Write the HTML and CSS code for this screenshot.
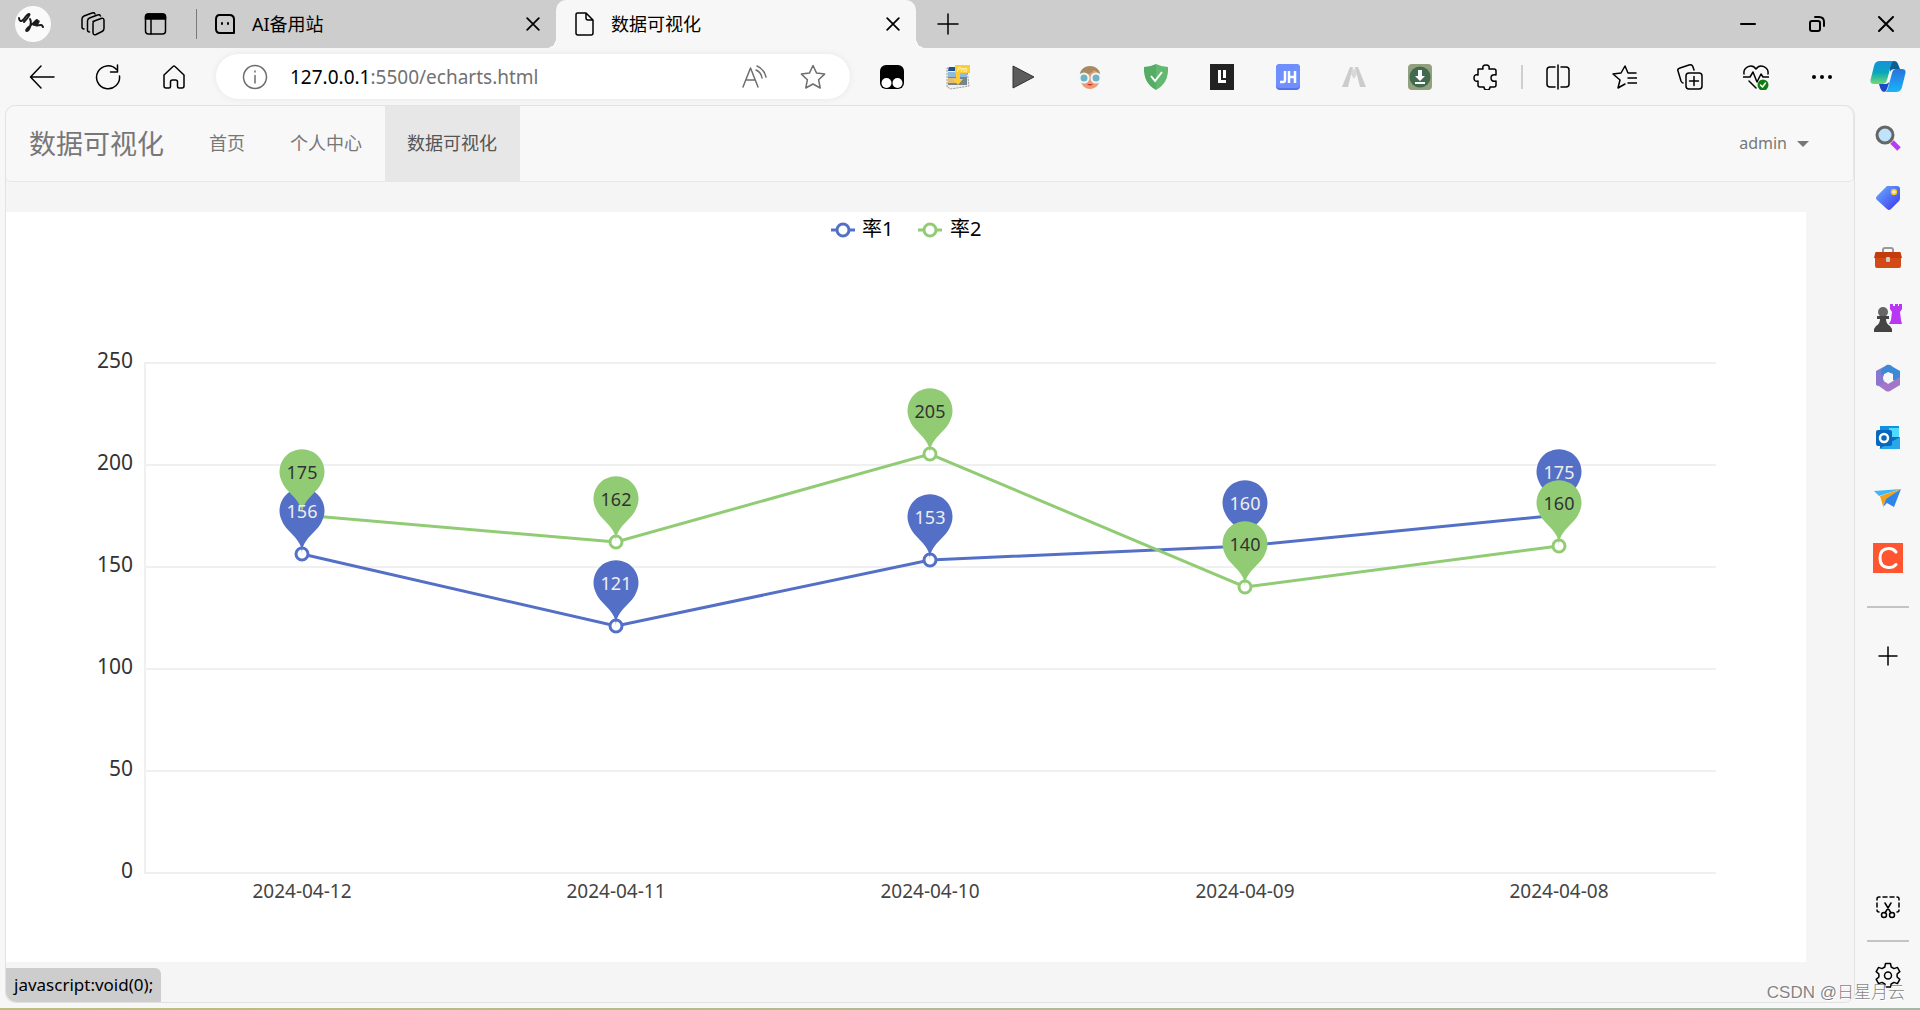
FILE: index.html
```html
<!DOCTYPE html>
<html lang="zh-CN">
<head>
<meta charset="utf-8">
<meta name="viewport" content="width=device-width, initial-scale=1">
<title>数据可视化</title>
<link rel="stylesheet" href="styles.css">
</head>
<body>
<header class="titlebar">
  <button class="avatar" aria-label="个人资料"><svg viewBox="0 0 36 36" width="36" height="36"><circle cx="18" cy="18" r="18" fill="#fafafa"/><path d="M4 12c0 3 2 4 4 2s4-6 6-6-3 6-5 8M15 13c2 3 0 11-3 12-2 0 0-3 3-5s5-5 7-6M19 19c2-2 2-4 4-4s-1 3-2 4 3 0 5 0 1 1 2 2" fill="none" stroke="#1c1c1c" stroke-width="2" stroke-linecap="round"/></svg></button>
  <button class="tool" aria-label="工作区"><svg class="ic" viewBox="0 0 26 26" width="26" height="26"><path d="M13 10.500l8-3q3-1 3 2v8q0 2-2 3l-6 3q-3 1-3-2v-9q0-2 1-2z"/><path d="M9.500 21q-2 0-2-2v-9q0-2 2-3l8-3q2-1 3 1M4 18q-2 0-2-2v-8q0-2 2-3l8-3q2-1 3 1"/></svg></button>
  <button class="tool" aria-label="标签操作"><svg class="ic" viewBox="0 0 26 26" width="26" height="26"><rect x="2.500" y="3" width="20" height="20" rx="3"/><path d="M2.500 8V6q0-3 3-3h14q3 0 3 3v2z" fill="#000"/><path d="M8 8v15"/></svg></button>
  <span class="rule"></span>
  <div class="tab">
    <svg class="ic heavy" viewBox="0 0 24 24" width="24" height="24"><path d="M6.500 3h10q4.500 0 4.500 4.500V21H7q-4 0-4-4V7.500Q3 3 6.500 3z"/><path d="M9 11v1M15 11v1"/></svg>
    <span class="tab-name">AI备用站</span>
    <button aria-label="关闭标签页"><svg class="ic" viewBox="0 0 12 12" width="14" height="14"><path d="M1 1l10 10M11 1L1 11"/></svg></button>
  </div>
  <div class="tab active">
    <svg class="ic" viewBox="0 0 24 26" width="24" height="26"><path d="M5.500 2H14l7 7v13q0 2-2 2H6q-2 0-2-2V4q0-2 1.500-2zM14 2v5q0 2 2 2h5"/></svg>
    <span class="tab-name">数据可视化</span>
    <button aria-label="关闭标签页"><svg class="ic" viewBox="0 0 12 12" width="14" height="14"><path d="M1 1l10 10M11 1L1 11"/></svg></button>
  </div>
  <button class="newtab" aria-label="新建标签页"><svg class="ic" viewBox="0 0 22 22" width="22" height="22"><path d="M11 1v20M1 11h20"/></svg></button>
  <div class="window-buttons">
    <button aria-label="最小化"><svg class="ic heavy" viewBox="0 0 16 16" width="16" height="16"><path d="M1 8h14"/></svg></button>
    <button aria-label="还原"><svg class="ic heavy" viewBox="0 0 16 16" width="16" height="16"><rect x="1" y="5" width="10" height="10" rx="2"/><path d="M6 1h4q5 0 5 5v4"/></svg></button>
    <button aria-label="关闭"><svg class="ic heavy" viewBox="0 0 16 16" width="16" height="16"><path d="M1 1l14 14M15 1L1 15"/></svg></button>
  </div>
</header>

<div class="toolbar">
  <button aria-label="返回"><svg class="ic" viewBox="0 0 26 26" width="26" height="26"><path d="M25 13H2M12 2L1.500 13 12 24"/></svg></button>
  <button aria-label="刷新"><svg class="ic" viewBox="0 0 26 26" width="26" height="26"><path d="M24.500 12A11.500 11.500 0 1 1 21.500 5.500M22.500 1v7h-7"/></svg></button>
  <button aria-label="主页"><svg class="ic" viewBox="0 0 26 26" width="26" height="26"><path d="M3 11L12 2.500q1-1 2 0L23 11v11q0 2-2 2h-3q-1.500 0-1.500-1.500V18q0-2-2-2h-3q-2 0-2 2v4.500Q9.500 24 8 24H5q-2 0-2-2z"/></svg></button>
  <div class="address">
    <svg class="ic soft" viewBox="0 0 26 26" width="26" height="26"><circle cx="13" cy="13" r="11.500"/><path d="M13 11.500V19M13 7v1"/></svg>
    <a class="url" href="#"><b>127.0.0.1</b>:5500/echarts.html</a>
    <button aria-label="大声朗读"><svg class="ic soft" viewBox="0 0 26 26" width="26" height="26"><path d="M2 23L9.500 4 17 23M5 16h9M16 2q7 3 9 11M15 6q5 2 6 8"/></svg></button>
    <button aria-label="收藏"><svg class="ic soft" viewBox="0 0 26 26" width="26" height="26"><path d="M13 1.500l3.600 7.600 8 1-6 5.600 1.600 8.300L13 20l-7.200 4 1.600-8.300-6-5.600 8-1z"/></svg></button>
  </div>
  <div class="extensions">
    <button aria-label="扩展一"><svg viewBox="0 0 24 24" width="24" height="24"><rect width="24" height="24" rx="6"/><circle cx="6.500" cy="18" r="5" fill="#fff"/><circle cx="17.500" cy="18" r="5" fill="#fff"/></svg></button>
    <button aria-label="图片下载"><svg viewBox="0 0 26 26" width="26" height="26"><path d="M2 4l20 1 2 17-18 3-4-2z" fill="#eee" stroke="#999" stroke-dasharray="2 1"/><path d="M4 3h8l2 4H3z" fill="#234f93"/><path d="M3 8h19v5H3z" fill="#8ebce0"/><path d="M3 13h19v8H3z" fill="#77848c"/><path d="M3 14h8v5H3z" fill="#e4bd75"/><path d="M10 1h15v8H15v6h3l-5 6-5-6h3V9h-1z" fill="#fc3"/><text x="12" y="8" font-size="7" font-style="italic" fill="#fff">Pro</text></svg></button>
    <button aria-label="播放"><svg viewBox="0 0 24 24" width="24" height="24"><path d="M1 1l21 11L1 23z" fill="#5c5c5c" stroke="#333"/></svg></button>
    <button aria-label="扩展四"><svg viewBox="0 0 24 24" width="24" height="24"><path d="M2 12C1 5 6 1 12 1s11 4 10 11z" fill="#a78a60"/><path d="M2 12c3 0 11-3 14-7 3 2 6 4 6 8 0 7-5 11-10 11S2 20 2 12z" fill="#ec9b72"/><path d="M9 19h6q-3 3-6 0z" fill="#c33"/><circle cx="6" cy="13" r="4.500" fill="#6fb3c4" stroke="#eef8fa" stroke-width="2"/><circle cx="18" cy="13" r="4.500" fill="#6fb3c4" stroke="#eef8fa" stroke-width="2"/></svg></button>
    <button aria-label="广告拦截"><svg viewBox="0 0 26 26" width="26" height="26"><path d="M13 0q6 3 12 3 1 16-12 23z" fill="#63b970"/><path d="M13 0Q7 3 1 3q-1 16 12 23z" fill="#55ad65"/><path d="M8 12l4 5 7-9" stroke="#fff" stroke-width="2" fill="none"/></svg></button>
    <button aria-label="LI"><svg viewBox="0 0 24 26" width="24" height="26"><path fill="#222" d="M0 0h24v26H0z"/><path d="M9.500 6v11.500H16M14.500 6v8" fill="none" stroke="#fff" stroke-width="3"/></svg></button>
    <button aria-label="JH"><svg viewBox="0 0 24 26" width="24" height="26"><rect width="24" height="26" rx="4" fill="#5871e8"/><rect width="24" height="24" rx="4" fill="#6f8fff"/><path d="M9 7v9q0 2-2 2H4M13 7v12M19 7v12M13 13h6" fill="none" stroke="#fff" stroke-width="2.500"/></svg></button>
    <button aria-label="扩展八"><svg viewBox="0 0 24 24" width="24" height="24"><path d="M0 22L8 2h3L6 22z" fill="#ccc"/><path d="M24 22L16 2h-3l5 20z" fill="#ccc"/><path d="M9 9l3 5 3-5-2-7-1 4-1-4z" fill="#d8d8d8"/></svg></button>
    <button aria-label="下载"><svg viewBox="0 0 26 26" width="26" height="26"><rect x="1" width="24" height="26" rx="4" fill="#93a07f"/><circle cx="13" cy="13" r="10.500" fill="#426b4d"/><path d="M11 6h4v6h3l-5 5-5-5h3zM8 18h10v2H8z" fill="#fff"/></svg></button>
    <button aria-label="扩展"><svg class="ic" viewBox="0 0 26 26" width="26" height="26"><path d="M5 5h5q-1-4 3-4t3 4h5q2 0 2 2v4q-5-1-5 3t5 3v4q0 2-2 2h-4q0 3-3 3t-3-3H7q-2 0-2-2v-4q-4 1-4-3t4-3z"/></svg></button>
  </div>
  <span class="rule pale"></span>
  <button aria-label="分屏"><svg class="ic" viewBox="0 0 26 26" width="26" height="26"><path d="M10 3H5Q2 3 2 6v14q0 3 3 3h5M16 3h5q3 0 3 3v14q0 3-3 3h-5M13 1v24"/></svg></button>
  <button aria-label="收藏夹"><svg class="ic" viewBox="0 0 26 26" width="26" height="26"><path d="M14 20l-7 4 2-8-7-6 8-1 4-7 3 7h8M17 14h9M17 19h9"/></svg></button>
  <button aria-label="集锦"><svg class="ic" viewBox="0 0 26 26" width="26" height="26"><rect x="9" y="9" width="16" height="16" rx="3"/><path d="M17 12.500v9M12.500 17h9M6 19q-1 0-2-2L1 7q-1-2 2-3l9-3q3-1 4 2l1 3"/></svg></button>
  <button aria-label="浏览器概要"><svg class="ic" viewBox="0 0 26 26" width="26" height="26"><path d="M1 10C0 3 9-1 13 5c4-6 13-2 12 5M0 13h7l3-5 4 10 4-8 2 3h6M6 17l7 7"/><circle cx="20" cy="21" r="5.500" fill="#107c10" stroke="none"/><path d="M17.500 21l2 2 3-4" stroke="#fff"/></svg></button>
  <button aria-label="设置及其他"><svg viewBox="0 0 24 24" width="24" height="24"><circle cx="4" cy="12" r="2"/><circle cx="12" cy="12" r="2"/><circle cx="20" cy="12" r="2"/></svg></button>
  <button aria-label="Copilot"><svg viewBox="0 0 36 34" width="36" height="34"><defs><linearGradient id="cp1" x2="0" y2="1"><stop stop-color="#1590dc"/><stop offset=".5" stop-color="#0aa6bd"/><stop offset="1" stop-color="#6fdc72"/></linearGradient><linearGradient id="cp2" x2="0" y2="1"><stop stop-color="#2a73dc"/><stop offset="1" stop-color="#18b4fb"/></linearGradient></defs><path d="M19 1h5q3 0 4 3l2 5h-5q-4 0-5 3z" fill="#0d5c93"/><path d="M9 24h6q4 0 5-4l-3 9q-1 3-3 3-3 0-5-8z" fill="#1b49c9"/><path d="M10 1h15q-3 0-4 4l-4 15q-1 4-5 4H4q-5 0-3-6L4 6q1-5 6-5z" fill="url(#cp1)"/><path d="M26 9h6q5 0 3 6l-3 12q-1 5-6 5H14q3 0 4-4l4-15q1-4 4-4z" fill="url(#cp2)"/></svg></button>
</div>

<div class="workspace">
  <main class="page">
    <nav class="navbar">
      <a class="brand" href="#">数据可视化</a>
      <ul class="menu">
        <li><a href="#">首页</a></li>
        <li><a href="#">个人中心</a></li>
        <li><a class="current" href="#">数据可视化</a></li>
      </ul>
      <button class="account">admin<span class="caret"></span></button>
    </nav>

    <section class="chart">
      <svg viewBox="0 0 1800 750" role="img" aria-label="率1 率2 折线图">
        <defs>
          <path id="pin" d="M-20-33A22.500 22.500 0 1 1 20-33C15-21 0-16 0 0 0-16-15-21-20-33z"/>
          <circle id="dot" r="6" fill="#fff" stroke-width="3"/>
        </defs>
        <g class="legend">
          <g class="blue"><path d="M825 18h24"/><circle cx="837" cy="18" r="6"/></g>
          <text x="856" y="24">率1</text>
          <g class="green"><path d="M912 18h24"/><circle cx="924" cy="18" r="6"/></g>
          <text x="944" y="24">率2</text>
        </g>
        <path class="grid" d="M138 151H1710M138 253H1710M138 355H1710M138 457H1710M138 559H1710M138 661H1710M139 150V661"/>
        <g class="y-axis">
          <text x="127" y="156">250</text><text x="127" y="258">200</text><text x="127" y="360">150</text>
          <text x="127" y="462">100</text><text x="127" y="564">50</text><text x="127" y="666">0</text>
        </g>
        <g class="x-axis">
          <text x="296" y="686">2024-04-12</text><text x="610" y="686">2024-04-11</text><text x="924" y="686">2024-04-10</text>
          <text x="1239" y="686">2024-04-09</text><text x="1553" y="686">2024-04-08</text>
        </g>
        <g class="blue">
          <polyline points="296,342 610,414 924,348 1239,334 1553,303"/>
          <use href="#dot" x="296" y="342"/><use href="#dot" x="610" y="414"/><use href="#dot" x="924" y="348"/><use href="#dot" x="1239" y="334"/><use href="#dot" x="1553" y="303"/>
        </g>
        <g class="green">
          <polyline points="296,303 610,330 924,242 1239,375 1553,334"/>
          <use href="#dot" x="296" y="303"/><use href="#dot" x="610" y="330"/><use href="#dot" x="924" y="242"/><use href="#dot" x="1239" y="375"/><use href="#dot" x="1553" y="334"/>
        </g>
        <g class="blue-pins">
          <use href="#pin" x="296" y="342"/><use href="#pin" x="610" y="414"/><use href="#pin" x="924" y="348"/><use href="#pin" x="1239" y="334"/><use href="#pin" x="1553" y="303"/>
        </g>
        <g class="green-pins">
          <use href="#pin" x="296" y="303"/><use href="#pin" x="610" y="330"/><use href="#pin" x="924" y="242"/><use href="#pin" x="1239" y="375"/><use href="#pin" x="1553" y="334"/>
        </g>
        <g class="pin-text light">
          <text x="296" y="306">156</text><text x="610" y="378">121</text><text x="924" y="312">153</text><text x="1239" y="298">160</text><text x="1553" y="267">175</text>
        </g>
        <g class="pin-text">
          <text x="296" y="267">175</text><text x="610" y="294">162</text><text x="924" y="206">205</text><text x="1239" y="339">140</text><text x="1553" y="298">160</text>
        </g>
      </svg>
    </section>
    <div class="status">javascript:void(0);</div>
  </main>

  <aside class="sidebar">
    <button aria-label="搜索"><svg viewBox="0 0 26 26" width="26" height="26"><path d="M17 17l7 7" stroke="#b83cf5" stroke-width="5"/><circle cx="10" cy="10" r="8" fill="#bfe3fb" stroke="#666" stroke-width="3"/></svg></button>
    <button aria-label="购物"><svg viewBox="0 0 26 26" width="26" height="26"><defs><linearGradient id="tg" x2="1" y2="1"><stop stop-color="#6cb0ff"/><stop offset="1" stop-color="#3b34ee"/></linearGradient></defs><path d="M12 1h10q3 0 3 3v9q0 2-1 3l-8 8q-2 2-4 0l-10-9q-2-2 0-4l8-8z" fill="url(#tg)"/><circle cx="19" cy="7" r="2.500" fill="#eee" stroke="#f5c518" stroke-width="1.500"/></svg></button>
    <button aria-label="工具"><svg viewBox="0 0 28 24" width="28" height="24"><path d="M9 8V4q0-2 2-2h6q2 0 2 2v4" fill="none" stroke="#999" stroke-width="2"/><rect x="1" y="10" width="26" height="12" rx="2" fill="#d34a17"/><path d="M2 6h24q1 0 1 2l1 4H0l1-4q0-2 1-2z" fill="#c23c0c"/><rect x="12" y="11" width="4" height="5" rx="1" fill="#ccc"/></svg></button>
    <button aria-label="游戏"><svg viewBox="0 0 28 28" width="28" height="28"><path d="M16 0h3v2h2V0h3v2h1V0h3v5l-2 3 1 8 1 4H15l2-4 1-8-2-3z" fill="#b836f4"/><circle cx="9" cy="8" r="5" fill="#666"/><path d="M3 12h12v3h-3q0 5 4 7l2 3v3H0v-3l2-3q4-2 4-7H3z" fill="#444"/></svg></button>
    <button aria-label="Microsoft 365"><svg viewBox="0 0 26 28" width="26" height="28"><path d="M12 1L1 7v14l8-4V9l8-5q-3-4-5-3z" fill="#7a7fd4"/><path d="M12 1q3-1 6 2l7 4v12l-7-3V10l-5-2-7 4V6z" fill="#3a8ad8"/><path d="M1 20l8-4 4 4 12-7v8l-10 6q-2 1-4 0z" fill="#a276c8"/><path d="M1 8l7 3v9l-6 2-1-2z" fill="#8a78d0"/><circle cx="13" cy="14" r="5" fill="#f7f7f7"/></svg></button>
    <button aria-label="Outlook"><svg viewBox="0 0 26 26" width="26" height="26"><path fill="#1490df" d="M5 1h19v12H5z"/><path fill="#50d9ff" d="M14 3h10v9H14z"/><path fill="#0f6cbd" d="M5 12h20v12H5z"/><path fill="#28a8ea" d="M25 12v12H4z"/><rect x="1" y="5" width="16" height="16" rx="2" fill="#0669bd"/><circle cx="9" cy="13" r="4" fill="none" stroke="#fff" stroke-width="2.500"/></svg></button>
    <button aria-label="Drop"><svg viewBox="0 0 28 22" width="28" height="22"><path d="M0 4l27-2-22 7z" fill="#43b7f5"/><path d="M27 2L6 9l3 10 3-6z" fill="#f1a21b"/><path d="M27 2L12 12l-3 8 4-4 7 4z" fill="#2f86ea"/></svg></button>
    <button aria-label="C"><svg viewBox="0 0 30 30" width="30" height="30"><path fill="#ff5530" d="M0 0h30v30H0z"/><path d="M23 9q-3-4-8-3.500Q7 6 7 15q0 9 8 9.500 5 .5 8-3" fill="none" stroke="#fff" stroke-width="3" stroke-linecap="round"/></svg></button>
    <hr>
    <button class="add" aria-label="添加"><svg class="ic" viewBox="0 0 20 20" width="20" height="20"><path d="M10 1v18M1 10h18"/></svg></button>
    <button class="snip" aria-label="屏幕截图"><svg class="ic" viewBox="0 0 26 26" width="26" height="26"><path d="M2 6V5q0-2 2-2h1M8 3h4M15 3h4M22 3q2 0 2 2v1M24 9v4M24 16q0 2-2 2M2 9v4M2 16q0 2 2 2M10 9l6 10M16 9l-6 10"/><circle cx="9" cy="21" r="2.500"/><circle cx="17" cy="21" r="2.500"/></svg></button>
    <hr class="low">
    <button aria-label="设置"><svg class="ic" viewBox="0 0 26 26" width="26" height="26"><path d="M10.500 1.500h5l.7 3.500 2.800 1.600 3.400-1.200 2.400 4.200-2.700 2.400v3l2.700 2.400-2.400 4.200-3.400-1.200-2.800 1.600-.7 3h-5l-.7-3L7 20.400l-3.400 1.200-2.400-4.200L3.900 15v-3L1.200 9.600l2.400-4.200L7 6.600 9.800 5z" stroke-linejoin="round"/><circle cx="13" cy="13.500" r="3.500"/></svg></button>
  </aside>
</div>
<footer class="desktop-edge"></footer>
<div class="watermark">CSDN @日星月云</div>
</body>
</html>
```
FILE: styles.css
```css
* { box-sizing: border-box; }

body {
  margin: 0;
  min-height: 100vh;
  display: flex;
  flex-direction: column;
  position: relative;
  background: #f7f7f7;
  color: #000;
  font-family: "Noto Sans", "Noto Sans CJK SC", sans-serif;
  font-size: 18px;
}

button {
  display: flex;
  align-items: center;
  justify-content: center;
  padding: 0;
  border: 0;
  background: none;
  color: inherit;
  font: inherit;
}

a { color: inherit; text-decoration: none; }
svg { display: block; flex: none; }
.ic { fill: none; stroke: #000; stroke-width: 1.5; stroke-linecap: round; stroke-linejoin: round; }
.heavy { stroke-width: 2; }
.soft { stroke: #6e6e6e; }

/* title bar and tabs */
.titlebar { display: flex; align-items: center; height: 48px; padding-left: 15px; background: #cdcdcd; }
.avatar { width: 36px; margin-right: 10px; }
.tool { width: 63px; height: 48px; }
.rule { width: 1px; height: 30px; margin: 0 9px; background: #7a7a7a; }
.rule.pale { width: 2px; height: 24px; margin: 0 2px; background: #cfcfcf; }

.tab {
  display: flex;
  align-items: center;
  flex: 0 1 350px;
  height: 48px;
  padding: 0 16px;
  position: relative;
}
.tab:not(.active) { padding-left: 7px; }
.tab > .ic { margin-right: 15px; }
.tab-name { flex: 1; line-height: 24px; white-space: nowrap; }
.tab.active { flex-basis: 360px; margin-right: 21px; background: #f7f7f7; border-radius: 10px 10px 0 0; }
.tab.active::before,
.tab.active::after { content: ""; position: absolute; bottom: 0; width: 10px; height: 10px; }
.tab.active::before { left: -10px; background: radial-gradient(circle at 0 0, transparent 10px, #f7f7f7 10px); }
.tab.active::after { right: -10px; background: radial-gradient(circle at 100% 0, transparent 10px, #f7f7f7 10px); }
.newtab { width: 22px; height: 48px; }
.window-buttons { display: flex; margin-left: auto; }
.window-buttons button { width: 69px; height: 46px; }

/* address row */
.toolbar { display: flex; align-items: center; height: 57px; padding-left: 9px; }
.toolbar > button, .extensions button { flex: 0 0 66px; height: 48px; }
.toolbar > button:last-child { flex-basis: 65px; }
.address {
  display: flex;
  align-items: center;
  flex: 1;
  min-width: 0;
  height: 45px;
  margin: 0 9px;
  padding: 0 8px 0 26px;
  border-radius: 24px;
  background: #fff;
  box-shadow: 0 0 6px #e6e6e6;
}
.address button { flex: 0 0 59px; height: 44px; }
.url { flex: 1; padding-left: 22px; font-size: 19px; line-height: 26px; color: #717171; white-space: nowrap; }
.url b { font-weight: 400; color: #000; }
.extensions { display: flex; }

/* window body */
.workspace { display: flex; flex: 1; }
.page {
  display: flex;
  flex-direction: column;
  flex: 1;
  min-width: 0;
  position: relative;
  margin: 0 0 5px 5px;
  border: 1px solid #e2e2e2;
  border-radius: 10px;
  background: #f5f5f5;
}
.navbar {
  display: flex;
  height: 76px;
  margin-bottom: 30px;
  border: 1px solid #e7e7e7;
  border-top: 0;
  border-left: 0;
  border-radius: 10px 10px 5px 5px;
  background: #f8f8f8;
  color: #777;
  line-height: 75px;
}
.brand { padding: 0 23px; font-size: 27px; white-space: nowrap; }
.menu { display: flex; margin: 0; padding: 0; list-style: none; }
.menu a { display: block; padding: 0 23px 0 22px; white-space: nowrap; }
.menu .current { background: #e7e7e7; color: #555; }
.account { margin-left: auto; padding-right: 44px; gap: 10px; font-size: 16px; }
.caret { border: 6px solid transparent; border-top-color: #777; border-bottom: 0; }

/* chart */
.chart { margin-right: 48px; background: #fff; }
.chart svg { width: 100%; height: auto; }
.legend { font-size: 20px; }
.legend circle { fill: #fff; }
.blue, .green { fill: none; stroke-width: 3; }
.blue { stroke: #5470c6; }
.green { stroke: #91cc75; }
.blue-pins { fill: #5470c6; }
.green-pins { fill: #91cc75; }
.grid { fill: none; stroke: #f0f0f0; stroke-width: 2; }
.y-axis { font-size: 21px; text-anchor: end; fill: #333; }
.x-axis { font-size: 19px; text-anchor: middle; fill: #444; }
.pin-text { font-size: 18px; text-anchor: middle; fill: #333; }
.pin-text.light { fill: #eee; }

.status {
  position: absolute;
  left: 0;
  bottom: 0;
  padding: 0 8px;
  border-radius: 0 6px 0 10px;
  background: #cdcdcd;
  font-size: 17px;
  line-height: 34px;
}

/* side strip */
.sidebar { display: flex; flex-direction: column; align-items: center; flex: 0 0 65px; padding: 3px 0; }
.sidebar button { width: 60px; height: 60px; }
.sidebar hr { width: 42px; height: 2px; margin: 18px 0; border: 0; background: #c4c4c4; }
.sidebar .snip { margin-top: auto; }
.sidebar hr.low { margin: 3px 0; }

.desktop-edge { height: 2px; background: linear-gradient(90deg, #bcbf7b, #a5b8a5); }
.watermark {
  position: absolute;
  right: 15px;
  bottom: 5px;
  color: rgba(90, 90, 90, 0.75);
  font-family: "Liberation Sans", "Noto Sans CJK SC", sans-serif;
  font-weight: 300;
  font-size: 17px;
  line-height: 24px;
  text-shadow: 1px 1px 0 #fff;
}
```
